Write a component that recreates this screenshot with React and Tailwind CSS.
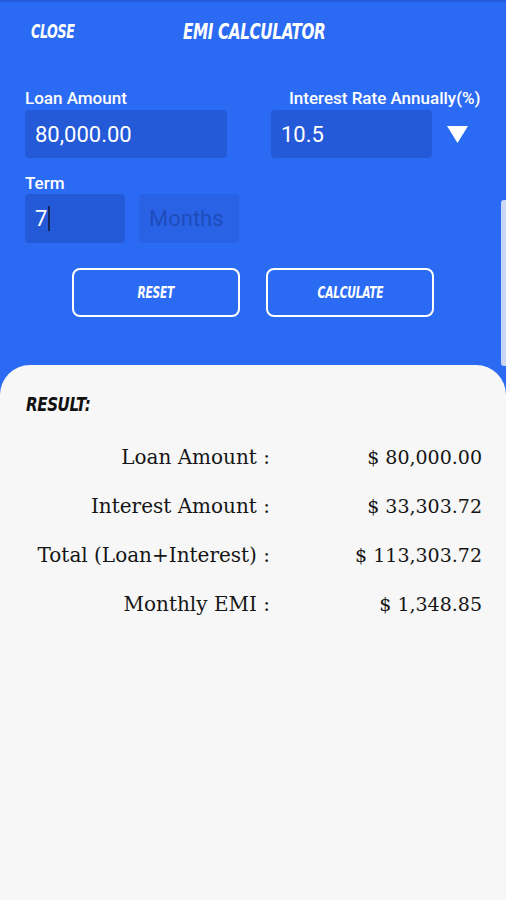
const ROWS = [
  ['Loan Amount :', '$ 80,000.00'],
  ['Interest Amount :', '$ 33,303.72'],
  ['Total (Loan+Interest) :', '$ 113,303.72'],
  ['Monthly EMI :', '$ 1,348.85'],
]

const condensed = "inline-block [font-family:'DejaVu_Sans_Condensed','DejaVu_Sans',sans-serif] font-stretch-condensed font-bold italic"
const roboto = "[font-family:Roboto,'Noto_Sans',sans-serif]"

export default function App() {
  return (
    <div className="relative flex min-h-screen w-full flex-col overflow-hidden bg-[#2b6bf3]">
      {/* status bar shade */}
      <div className="h-[3px] bg-gradient-to-b from-[#2254cf] to-[#2b6bf3]" />

      {/* Header */}
      <div className="relative h-[56px]">
        <span className={`${condensed} absolute left-[31px] top-[14px] origin-left scale-x-[0.74] text-[19px] tracking-[-0.5px] text-white`}>
          CLOSE
        </span>
        <span className={`${condensed} absolute left-[183px] top-[12px] origin-left scale-x-[0.77] text-[22px] tracking-[-0.5px] text-white`}>
          EMI CALCULATOR
        </span>
      </div>

      {/* Form */}
      <div className={`${roboto} flex flex-col px-[25px] pt-[29px]`}>
        <div className="flex">
          <div className="flex w-[202px] flex-col">
            <span className="text-[17px] font-medium leading-[20px] text-white">Loan Amount</span>
            <div className="mt-[2px] flex h-[48px] items-center rounded-[4px] bg-[#2459d8] px-[10px] text-[22px] text-white">
              80,000.00
            </div>
          </div>
          <div className="ml-[44px] flex flex-col">
            <span className="ml-[18px] whitespace-nowrap text-[17px] font-medium leading-[20px] text-white">Interest Rate Annually(%)</span>
            <div className="mt-[2px] flex items-center">
              <div className="flex h-[48px] w-[161px] items-center rounded-[4px] bg-[#2459d8] px-[10px] text-[22px] text-white">
                10.5
              </div>
              <svg className="ml-[15px]" width="21" height="17" viewBox="0 0 21 17">
                <polygon points="0,0 21,0 10.5,17" fill="#ffffff" />
              </svg>
            </div>
          </div>
        </div>

        <span className="mt-[15px] text-[17px] font-medium leading-[20px] text-white">Term</span>
        <div className="mt-[1px] flex gap-[14px]">
          <div className="flex h-[49px] w-[100px] items-center rounded-[4px] bg-[#2459d8] px-[10px] text-[22px] text-white">
            7<span className="ml-[1px] h-[25px] w-[2px] bg-[#14285e]" />
          </div>
          <div className="flex h-[49px] w-[100px] items-center rounded-[4px] bg-[#2a62e6] px-[10px] text-[22px] text-[#1e4cbd]">
            Months
          </div>
        </div>

        <div className="mt-[25px] flex justify-center gap-[26px]">
          <button className="flex h-[49px] w-[168px] items-center justify-center rounded-[8px] border-2 border-white">
            <span className={`${condensed} origin-center scale-x-[0.74] text-[16px] tracking-[-0.3px] text-white`}>RESET</span>
          </button>
          <button className="flex h-[49px] w-[168px] items-center justify-center rounded-[8px] border-2 border-white">
            <span className={`${condensed} origin-center scale-x-[0.74] text-[16px] tracking-[-0.3px] text-white`}>CALCULATE</span>
          </button>
        </div>
      </div>

      {/* scroll edge */}
      <div className="absolute right-0 top-[200px] h-[166px] w-[5px] rounded-l-[3px] bg-[#c9d6f5]" />

      {/* Result panel */}
      <div className="mt-[48px] flex flex-1 flex-col rounded-t-[30px] bg-[#f7f7f7] pt-[24px]">
        <div className="pl-[26px]">
          <span className={`${condensed} origin-left scale-x-[0.84] text-[20px] tracking-[-0.5px] text-[#111]`}>RESULT:</span>
        </div>
        <div className="mt-[23px] flex flex-col gap-[19px] [font-family:'DejaVu_Serif',serif] leading-[30px] text-[#151515]">
          {ROWS.map(([label, value]) => (
            <div key={label} className="flex">
              <span className="w-[270px] text-right text-[20px]">{label}</span>
              <span className="w-[212px] text-right text-[19px]">{value}</span>
            </div>
          ))}
        </div>
      </div>
    </div>
  )
}
